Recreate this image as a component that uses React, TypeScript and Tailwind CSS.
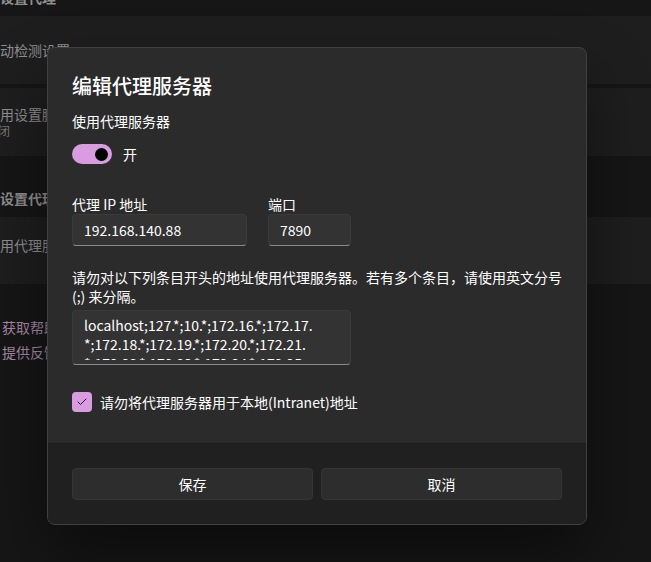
import { Check } from "lucide-react";

const BgCard = ({ children, className = "" }: { children: React.ReactNode; className?: string }) => (
  <div className={`h-[68px] bg-[#1e1e1e] flex flex-col justify-center ${className}`}>{children}</div>
);

const Field = ({ label, value, width }: { label: string; value: string; width: string }) => (
  <div className={`flex flex-col ${width}`}>
    <span className="text-[14px] leading-[18px] text-white">{label}</span>
    <div className="mt-[1px] h-[32px] rounded-[4px] bg-[#333333] border border-[#3a3a3a] border-b-[#8a8a8a] flex items-center pl-[11px] text-[14px] text-white">
      {value}
    </div>
  </div>
);

const App = () => {
  return (
    <div className="relative w-[651px] h-[562px] overflow-hidden bg-[#161616] font-['Noto_Sans_CJK_SC',sans-serif]">
      {/* settings page behind the dialog */}
      <div className="flex flex-col">
        <div className="h-[16px] flex items-end">
          <span className="-ml-[28px] mb-[9px] text-[14px] leading-[20px] font-semibold text-[#8f8f8f]">自动设置代理</span>
        </div>
        <BgCard>
          <span className="-ml-[14px] text-[14px] leading-[20px] text-[#8f8f8f]">自动检测设置</span>
        </BgCard>
        <BgCard className="mt-[4px]">
          <span className="-ml-[14px] text-[14px] leading-[17px] text-[#8f8f8f]">使用设置脚本</span>
          <span className="-ml-[14px] text-[12px] leading-[16px] text-[#7a7a7a]">关闭</span>
        </BgCard>
        <div className="h-[61px] flex items-end">
          <span className="-ml-[28px] mb-[9px] text-[14px] leading-[20px] font-semibold text-[#8f8f8f]">手动设置代理</span>
        </div>
        <div className="h-[67px] bg-[#1e1e1e] pt-[15px]">
          <span className="-ml-[14px] text-[14px] leading-[20px] text-[#8f8f8f]">使用代理服务器</span>
        </div>
        <div className="mt-[33px] pl-[2px] flex flex-col gap-[5px] text-[14px] leading-[20px] text-[#a78aa6]">
          <span>获取帮助</span>
          <span>提供反馈</span>
        </div>
      </div>

      {/* dialog */}
      <div className="absolute left-[47px] top-[47px] w-[540px] h-[478px] rounded-[8px] border border-[#404040] bg-[#2b2b2b] overflow-hidden flex flex-col shadow-[0_32px_64px_rgba(0,0,0,0.45)]">
        <div className="flex-1 px-[24px] pt-[24px] flex flex-col">
          <h1 className="text-[20px] leading-[28px] font-medium text-white">编辑代理服务器</h1>
          <span className="mt-[11px] text-[14px] leading-[20px] text-white">使用代理服务器</span>
          <div className="mt-[13px] flex items-center gap-[11px]">
            <div className="w-[40px] h-[20px] rounded-full bg-[#d99ce0] flex items-center justify-end pr-[4px]">
              <div className="w-[13px] h-[13px] rounded-full bg-black" />
            </div>
            <span className="text-[14px] leading-[20px] text-white">开</span>
          </div>

          <div className="mt-[31px] flex gap-[21px]">
            <Field label="代理 IP 地址" value="192.168.140.88" width="w-[175px]" />
            <Field label="端口" value="7890" width="w-[83px]" />
          </div>

          <p className="mt-[22px] text-[14px] leading-[19px] text-white whitespace-nowrap">
            请勿对以下列条目开头的地址使用代理服务器。若有多个条目，请使用英文分号
            <br />
            (;) 来分隔。
          </p>

          <div className="mt-[4px] w-[279px] h-[55px] rounded-[4px] bg-[#333333] border border-[#3a3a3a] border-b-[#8a8a8a] pl-[11px] pt-[5px]">
            <div className="h-[44px] overflow-hidden text-[14px] leading-[19px] text-white whitespace-nowrap">
              <div>localhost;127.*;10.*;172.16.*;172.17.</div>
              <div>*;172.18.*;172.19.*;172.20.*;172.21.</div>
              <div>*;172.22.*;172.23.*;172.24.*;172.25.</div>
            </div>
          </div>

          <div className="mt-[21px] h-[32px] flex items-center gap-[8px]">
            <div className="w-[20px] h-[20px] rounded-[4px] bg-[#d99ce0] flex items-center justify-center">
              <Check size={12} strokeWidth={2} color="#1c1c1c" />
            </div>
            <span className="text-[14px] leading-[20px] text-white">请勿将代理服务器用于本地(Intranet)地址</span>
          </div>
        </div>

        <div className="h-[81px] bg-[#202020] border-t border-[#1c1c1c] px-[24px] pt-[24px] flex gap-[8px]">
          <button className="flex-1 h-[32px] rounded-[4px] bg-[#2d2d2d] border border-[#353535] text-[14px] text-white">
            保存
          </button>
          <button className="flex-1 h-[32px] rounded-[4px] bg-[#2d2d2d] border border-[#353535] text-[14px] text-white">
            取消
          </button>
        </div>
      </div>
    </div>
  );
};

export default App;
